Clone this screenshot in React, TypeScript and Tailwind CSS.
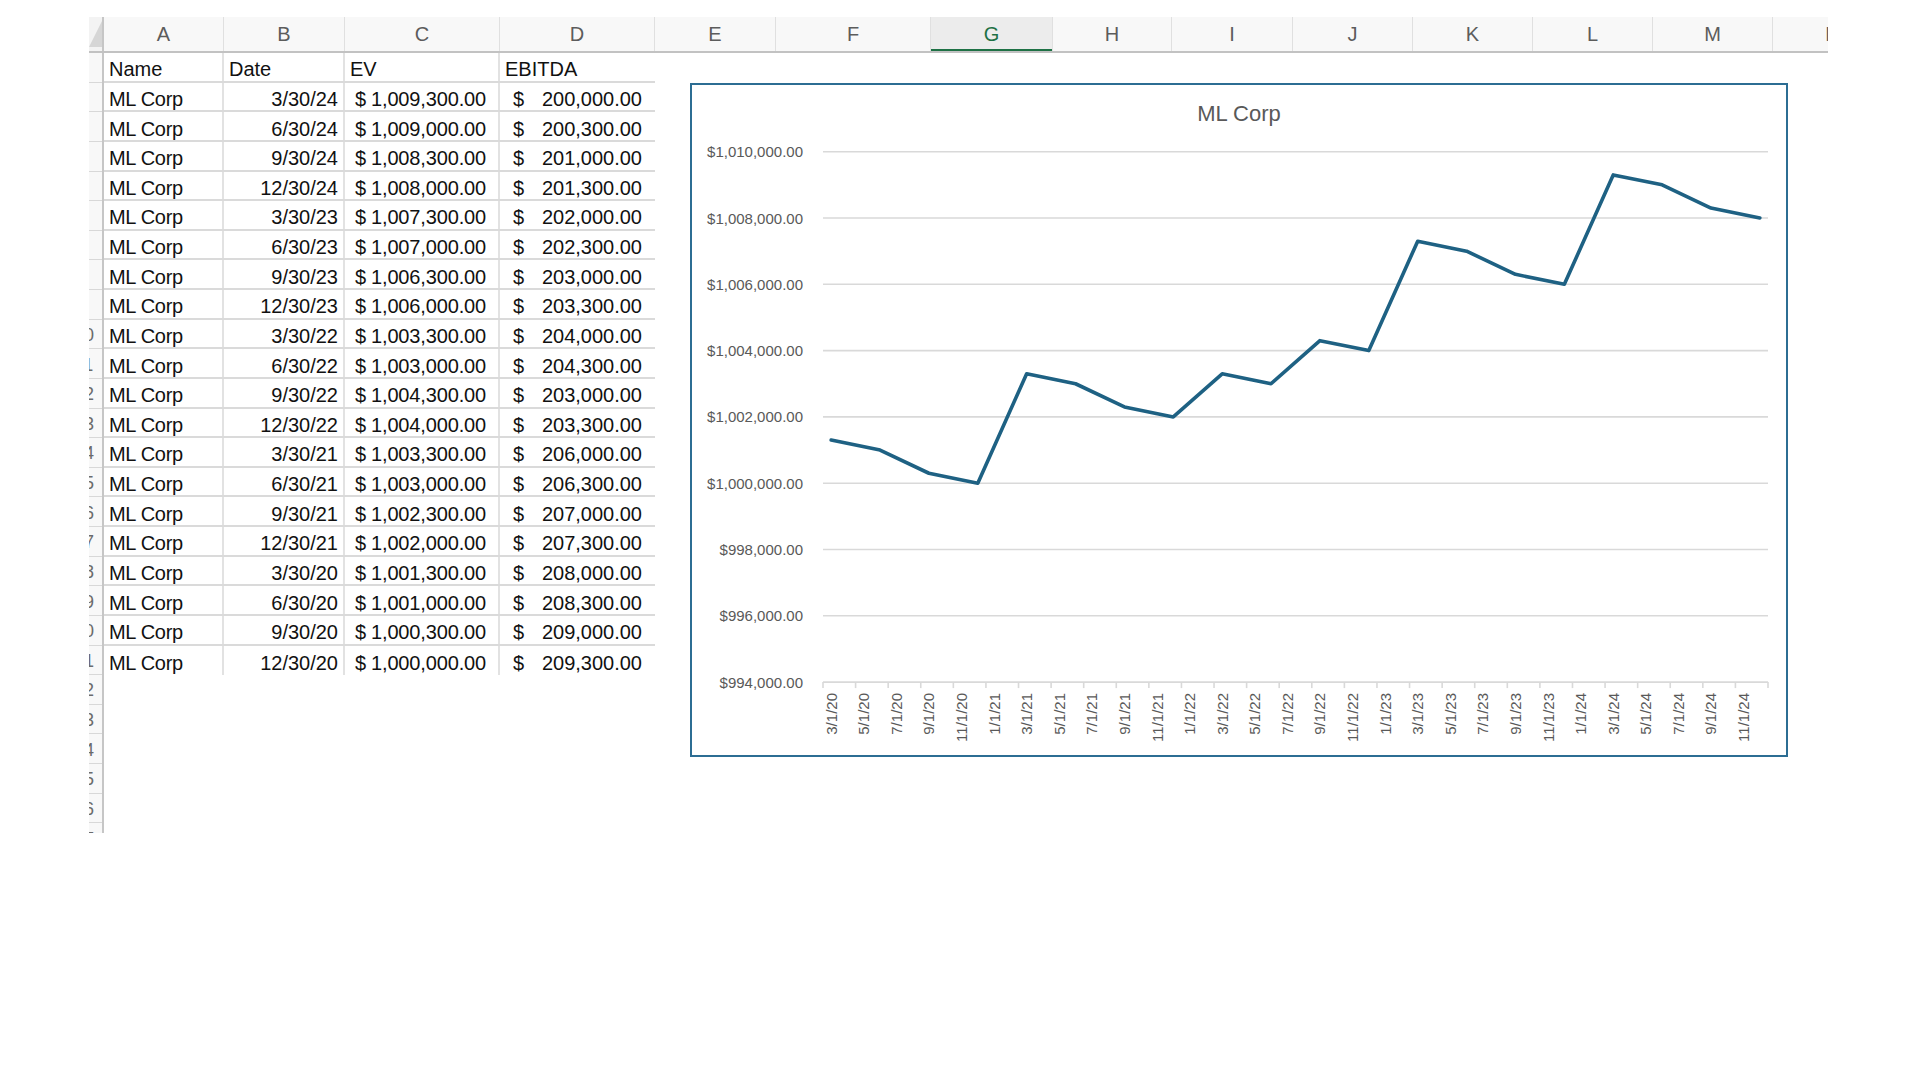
import React from "react";

const headerCols = [
  { l: "A", w: "w-[120px]" },
  { l: "B", w: "w-[121px]" },
  { l: "C", w: "w-[155px]" },
  { l: "D", w: "w-[155px]" },
  { l: "E", w: "w-[121px]" },
  { l: "F", w: "w-[155px]" },
  { l: "G", w: "w-[122px]", sel: true },
  { l: "H", w: "w-[119px]" },
  { l: "I", w: "w-[121px]" },
  { l: "J", w: "w-[120px]" },
  { l: "K", w: "w-[120px]" },
  { l: "L", w: "w-[120px]" },
  { l: "M", w: "w-[120px]" },
  { l: "N", w: "w-[120px]" },
];

const rows: [string, string, string][] = [
  ["3/30/24", "1,009,300.00", "200,000.00"],
  ["6/30/24", "1,009,000.00", "200,300.00"],
  ["9/30/24", "1,008,300.00", "201,000.00"],
  ["12/30/24", "1,008,000.00", "201,300.00"],
  ["3/30/23", "1,007,300.00", "202,000.00"],
  ["6/30/23", "1,007,000.00", "202,300.00"],
  ["9/30/23", "1,006,300.00", "203,000.00"],
  ["12/30/23", "1,006,000.00", "203,300.00"],
  ["3/30/22", "1,003,300.00", "204,000.00"],
  ["6/30/22", "1,003,000.00", "204,300.00"],
  ["9/30/22", "1,004,300.00", "203,000.00"],
  ["12/30/22", "1,004,000.00", "203,300.00"],
  ["3/30/21", "1,003,300.00", "206,000.00"],
  ["6/30/21", "1,003,000.00", "206,300.00"],
  ["9/30/21", "1,002,300.00", "207,000.00"],
  ["12/30/21", "1,002,000.00", "207,300.00"],
  ["3/30/20", "1,001,300.00", "208,000.00"],
  ["6/30/20", "1,001,000.00", "208,300.00"],
  ["9/30/20", "1,000,300.00", "209,000.00"],
  ["12/30/20", "1,000,000.00", "209,300.00"],
];

const series = [
  1001300, 1001000, 1000300, 1000000, 1003300, 1003000, 1002300, 1002000,
  1003300, 1003000, 1004300, 1004000, 1007300, 1007000, 1006300, 1006000,
  1009300, 1009000, 1008300, 1008000,
];

const yLabels = [
  "$1,010,000.00",
  "$1,008,000.00",
  "$1,006,000.00",
  "$1,004,000.00",
  "$1,002,000.00",
  "$1,000,000.00",
  "$998,000.00",
  "$996,000.00",
  "$994,000.00",
];

const xLabels: string[] = [];
{
  let m = 3;
  let y = 20;
  for (let i = 0; i < 29; i++) {
    xLabels.push(`${m}/1/${y}`);
    m += 2;
    if (m > 12) {
      m -= 12;
      y += 1;
    }
  }
}

const X0 = 823;
const X1 = 1768;
const MONTH = (X1 - X0) / 58;
const Y0 = 151.7;
const STEP = 66.3;

function Chart() {
  const pts = series
    .map((v, i) => {
      const x = X0 + (3 * i + 0.5) * MONTH;
      const y = Y0 + ((1010000 - v) / 2000) * STEP;
      return `${x.toFixed(2)},${y.toFixed(2)}`;
    })
    .join(" ");
  return (
    <div className="absolute left-[690px] top-[83px] w-[1098px] h-[674px] border-2 border-[#2c6d93] bg-white">
      <svg width="1094" height="670" className="block">
        <g transform="translate(-692,-85)" fontFamily="'Liberation Sans', Arial, sans-serif">
          <text x="1239" y="120.5" textAnchor="middle" fontSize="22" fill="#595959">
            ML Corp
          </text>
          {yLabels.map((l, k) => (
            <g key={l}>
              <line x1={X0} x2={X1} y1={Y0 + STEP * k} y2={Y0 + STEP * k} stroke="#d9d9d9" strokeWidth="1.6" />
              <text x="803" y={Y0 + STEP * k} dominantBaseline="central" textAnchor="end" fontSize="15" fill="#595959">
                {l}
              </text>
            </g>
          ))}
          {Array.from({ length: 30 }).map((_, k) => (
            <line
              key={k}
              x1={X0 + 2 * MONTH * k}
              x2={X0 + 2 * MONTH * k}
              y1={Y0 + STEP * 8}
              y2={Y0 + STEP * 8 + 6}
              stroke="#d9d9d9"
              strokeWidth="1.6"
            />
          ))}
          {xLabels.map((l, k) => (
            <text
              key={l}
              transform={`translate(${(X0 + (2 * k + 0.5) * MONTH).toFixed(2)},693) rotate(-90)`}
              textAnchor="end"
              dominantBaseline="central"
              fontSize="15"
              fill="#595959"
            >
              {l}
            </text>
          ))}
          <polyline points={pts} fill="none" stroke="#1e6183" strokeWidth="3.6" strokeLinejoin="round" strokeLinecap="round" />
        </g>
      </svg>
    </div>
  );
}

export default function App() {
  const rowNums = Array.from({ length: 27 }, (_, i) => i + 1);
  return (
    <div className="relative w-[1920px] h-[1080px] overflow-hidden bg-white font-['Liberation_Sans',Arial,sans-serif] text-[20px] text-[#111]">
      <div className="flex flex-col pt-[17px] pl-[89px]">
        {/* column header */}
        <div className="flex h-[36px] w-[1739px] overflow-hidden border-b-2 border-[#c2c2c2] bg-[#f8f8f8] text-[20px]">
          <div className="relative w-[15px] shrink-0 border-r-2 border-[#c6c6c6] bg-[#f3f3f3]">
            <svg width="13" height="34" className="block">
              <polygon points="0,30 13,30 13,4" fill="#d6d6d6" />
            </svg>
          </div>
          {headerCols.map((c) => (
            <div
              key={c.l}
              className={`relative shrink-0 ${c.w} flex items-center justify-center border-r border-[#e0e0e0] ${
                c.sel ? "bg-[#ececec] text-[#1e7145]" : "text-[#5c5c5c]"
              }`}
            >
              {c.l}
              {c.sel && <div className="absolute left-0 right-0 bottom-[-2px] h-[4px] bg-[#1e7145]" />}
            </div>
          ))}
        </div>
        {/* body */}
        <div className="flex h-[780px]">
          <div className="w-[15px] shrink-0 overflow-hidden border-r-2 border-[#c6c6c6] bg-[#f8f8f8]">
            {rowNums.map((n) => (
              <div key={n} className="h-[29.63px] shrink-0 overflow-hidden border-b border-[#d8d8d8]">
                <div className="ml-[-25px] w-[40px] h-full flex items-center justify-center pt-[3px] text-[18px] text-[#6b6b6b]">
                  {n}
                </div>
              </div>
            ))}
          </div>
          <div className="flex flex-col w-[551px]">
            <div className="flex h-[29.63px] border-b-2 border-[#dadada]">
              <div className="w-[120px] flex items-center pt-[5px] pl-[5px] border-r-2 border-[#e2e2e2]">Name</div>
              <div className="w-[121px] flex items-center pt-[5px] pl-[5px] border-r-2 border-[#e2e2e2]">Date</div>
              <div className="w-[155px] flex items-center pt-[5px] pl-[5px] border-r-2 border-[#e2e2e2]">EV</div>
              <div className="w-[155px] flex items-center pt-[5px] pl-[5px]">EBITDA</div>
            </div>
            {rows.map((r, i) => (
              <div
                key={i}
                className={`flex h-[29.63px] ${i < rows.length - 1 ? "border-b-2 border-[#dadada]" : ""}`}
              >
                <div className="w-[120px] flex items-center pt-[5px] pl-[5px] border-r-2 border-[#e2e2e2] tracking-[-0.3px]">ML Corp</div>
                <div className="w-[121px] flex items-center justify-end pt-[5px] pr-[5px] border-r-2 border-[#e2e2e2]">{r[0]}</div>
                <div className="w-[155px] flex items-center justify-between pt-[5px] pl-[10px] pr-[12px] border-r-2 border-[#e2e2e2]">
                  <span>$</span>
                  <span className="tracking-[-0.15px]">{r[1]}</span>
                </div>
                <div className="w-[155px] flex items-center justify-between pt-[5px] pl-[13px] pr-[13px]">
                  <span>$</span>
                  <span>{r[2]}</span>
                </div>
              </div>
            ))}
          </div>
        </div>
      </div>
      <Chart />
    </div>
  );
}
